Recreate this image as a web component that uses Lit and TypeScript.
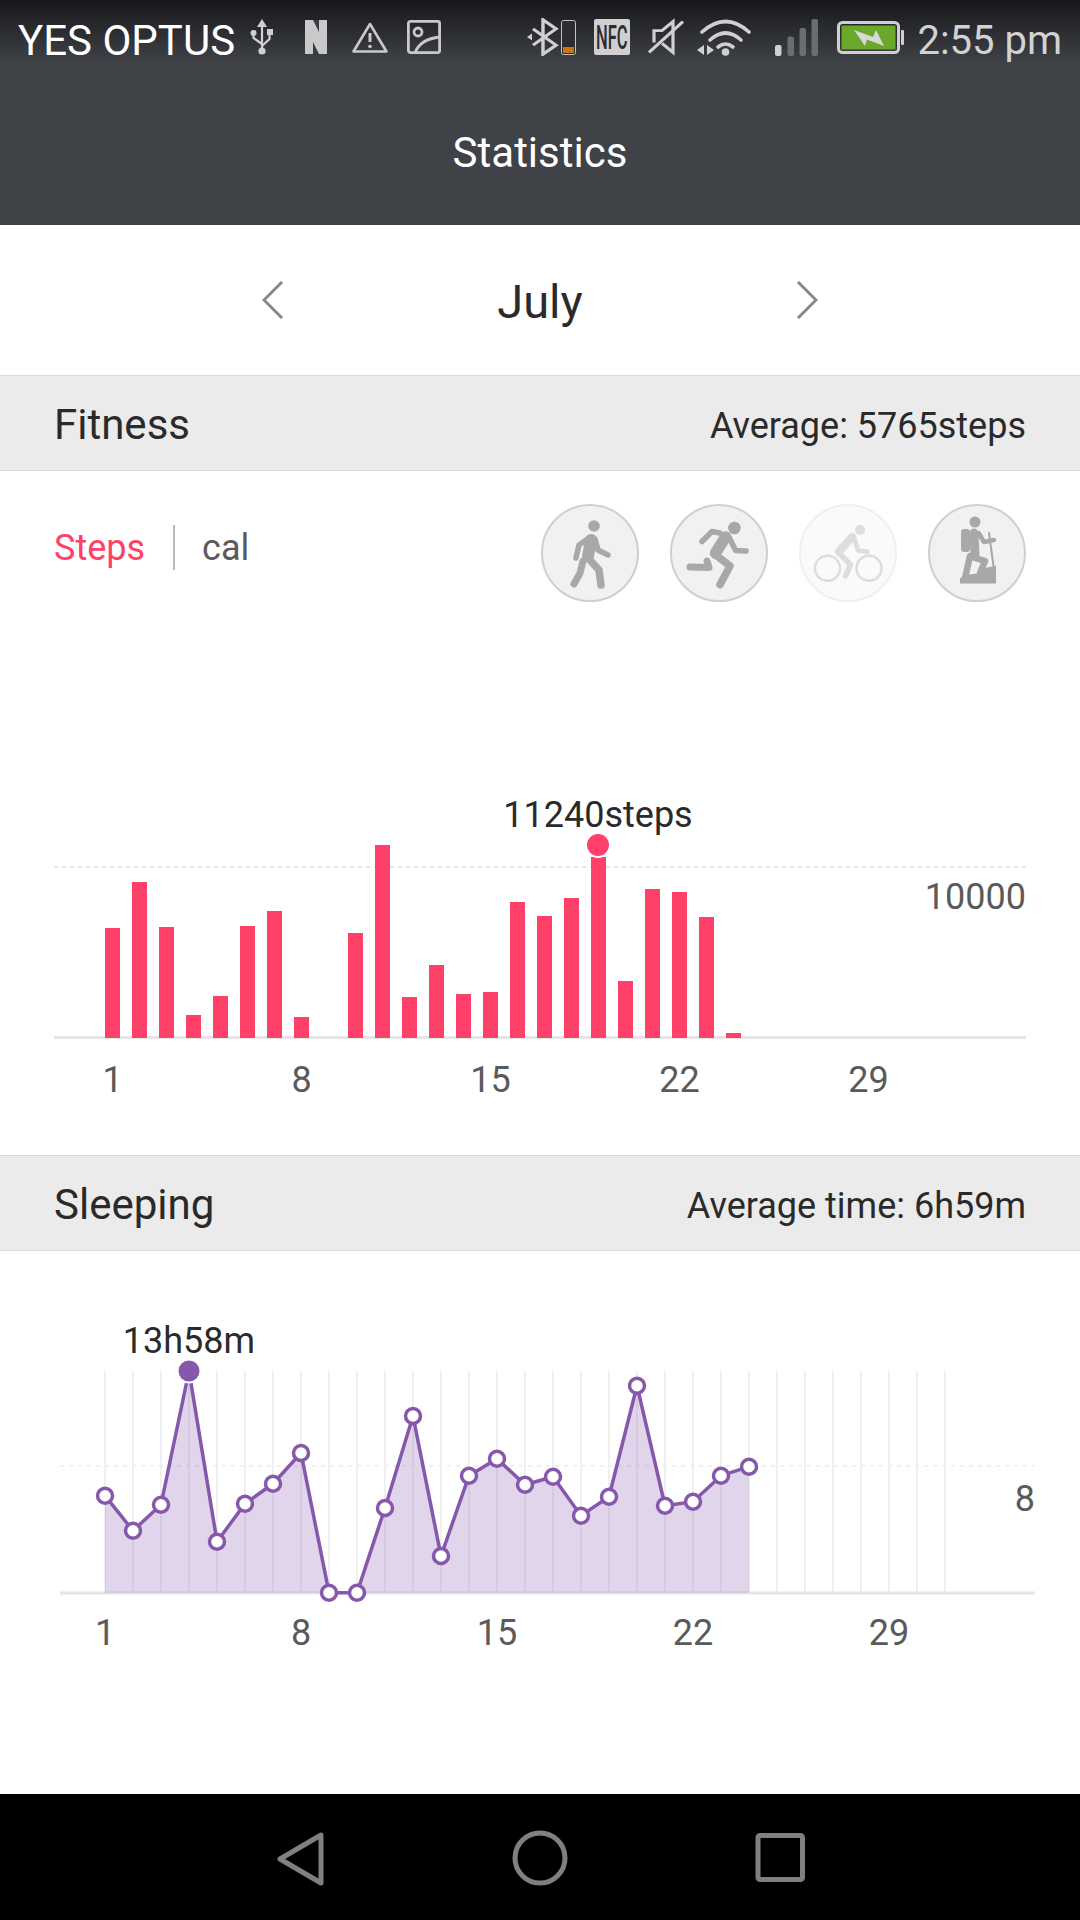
import { LitElement, html, svg, css } from "lit";
import { customElement } from "lit/decorators.js";

// top edge of each bar in page pixels, 0 = no bar that day
const STEP_TOPS = [928, 882, 927, 1015, 996, 926, 911, 1017, 0, 933, 845, 997, 965, 994, 992, 902, 916, 898, 857, 981, 889, 892, 917, 1033];
const BAR_BOTTOM = 1038;

const SLEEP_Y = [1495.7, 1530.7, 1504.7, 1371, 1541.7, 1503.7, 1483.7, 1453, 1592.7, 1592.7, 1508, 1416, 1556, 1475.7, 1458.7, 1484.7, 1476.7, 1515.7, 1496.7, 1385.7, 1505.7, 1501.7, 1475.7, 1466.7];
const sleepX = (i: number) => 105 + 28 * i;

const walker = svg`
  <circle class="solid" cx="53" cy="22" r="5.8"></circle>
  <path d="M50 36 L47 52" stroke-width="12"></path>
  <path d="M48 34 L38 41 L35 54" stroke-width="5.5"></path>
  <path d="M54 35 L57 46 L67 51" stroke-width="5.5"></path>
  <path d="M47 54 L58 66 L60 81" stroke-width="7.5"></path>
  <path d="M42 57 L39 69 L33 80" stroke-width="7"></path>`;

const runner = svg`
  <circle class="solid" cx="64.4" cy="24" r="6.3"></circle>
  <path d="M55.5 33 L45.5 49" stroke-width="11.5"></path>
  <path d="M50 29 L42 27.5 L32 37.5" stroke-width="5.5"></path>
  <path d="M59 33 L65.6 46.5 L76 47" stroke-width="5.5"></path>
  <path d="M45.5 50.7 L60 62 L50 80.6" stroke-width="7.5"></path>
  <path d="M37 57 L39 63.5 L20 63" stroke-width="7"></path>`;

const cyclist = svg`
  <circle class="ring" cx="28.5" cy="64.3" r="12.5"></circle>
  <circle class="ring" cx="70" cy="64.3" r="12.5"></circle>
  <circle class="solid" cx="61" cy="26" r="5"></circle>
  <path d="M53 33 L40 47.5" stroke-width="8"></path>
  <path d="M55 33 L59 46.5 L68.5 47.8" stroke-width="4.5"></path>
  <path d="M40 49 L51.5 60.7 L46.5 72" stroke-width="5.5"></path>`;

const hiker = svg`
  <circle class="solid" cx="47" cy="18" r="5.5"></circle>
  <rect class="solid" x="33" y="25" width="9" height="23" rx="3"></rect>
  <path d="M46 29 L47 50" stroke-width="9"></path>
  <path d="M50.6 29 L56 38 L66 36" stroke-width="4.5"></path>
  <path d="M61 29 L65.5 62" stroke-width="2"></path>
  <path d="M44 53 L57 57 L52 69" stroke-width="6.5"></path>
  <path d="M42 52 L37 74" stroke-width="6.5"></path>
  <polygon class="solid" points="32,79.6 32,74 41,70.6 54,69 57,64 68,61.7 68,79.6"></polygon>`;

@customElement("app-root")
export class AppRoot extends LitElement {
  static styles = css`
    :host {
      display: flex;
      flex-direction: column;
      width: 1080px;
      height: 1920px;
      background: #fff;
      font-family: Roboto, sans-serif;
      color: #2a2a2a;
      overflow: hidden;
    }

    header {
      background: linear-gradient(#17181b 0, #3f4247 64px);
      color: #fff;
    }
    .status {
      display: flex;
      align-items: center;
      height: 74px;
      padding: 0 18px;
    }
    .status svg { display: block; flex: none; }
    .carrier { font-size: 42px; line-height: 44px; margin-top: 7px; }
    .usb { width: 24px; height: 36px; margin-left: 15px; }
    .n-icon { width: 22px; height: 34px; margin-left: 31px; }
    .warn { width: 36px; height: 31px; margin-left: 25px; }
    .image { width: 34px; height: 34px; margin-left: 19px; }
    .right { display: flex; align-items: center; margin-left: auto; }
    .bt { width: 32px; height: 38px; }
    .minibat { width: 15px; height: 35px; margin-left: 2px; }
    .nfc { width: 36px; height: 36px; margin-left: 18px; overflow: visible; }
    .mute { width: 36px; height: 38px; margin-left: 18px; }
    .wifi { width: 55px; height: 37px; margin-left: 13px; }
    .signal { width: 44px; height: 37px; margin-left: 23px; }
    .battery { width: 67px; height: 33px; margin-left: 18px; }
    .time { font-size: 40px; line-height: 44px; color: #d2d2d2; margin: 7px 0 0 13px; }

    .toolbar {
      height: 146px;
      padding-top: 5px;
      display: flex;
      align-items: center;
      justify-content: center;
      font-size: 42px;
    }

    .month {
      height: 150px;
      display: grid;
      grid-template-columns: 262px 22px 1fr 22px 262px;
      align-items: center;
      font-size: 47px;
      text-align: center;
    }
    .month span { padding-top: 2px; }
    .month svg { display: block; width: 22px; height: 38px; }
    .month .prev { grid-column: 2; }

    .section-head {
      height: 94px;
      display: flex;
      align-items: center;
      justify-content: space-between;
      padding: 0 54px;
      background: #ebebeb;
      border-top: 1px solid #d9d9d9;
      border-bottom: 1px solid #d9d9d9;
    }
    .section-head .name { font-size: 42px; padding-top: 2px; }
    .section-head .avg { font-size: 36px; padding-top: 6px; }

    .fitness { height: 684px; }
    .tabs {
      display: flex;
      align-items: flex-start;
      justify-content: space-between;
      padding: 33px 54px 0;
    }
    .units {
      display: flex;
      align-items: center;
      height: 86px;
      font-size: 36px;
      color: #5a5a5a;
    }
    .units span:not(.sep) { padding-top: 2px; }
    .units .active { color: #ff4068; }
    .units .sep { width: 2px; height: 45px; background: #bbb; margin: 0 27px 0 28px; }
    .kinds { display: flex; gap: 31px; }
    .kind {
      width: 98px;
      height: 98px;
      box-sizing: border-box;
      border-radius: 50%;
      background: #f1f1f1;
      border: 2px solid #cfcfcf;
    }
    .kind svg { display: block; margin: -2px; width: 98px; height: 98px; }
    .kind path { fill: none; stroke: #a8a8a8; stroke-linecap: round; stroke-linejoin: round; }
    .kind .solid { fill: #a8a8a8; stroke: none; }
    .kind .ring { fill: none; stroke: #a8a8a8; stroke-width: 2.5; }
    .kind.off { background: #fafafa; border-color: #f0f0f0; }
    .kind.off path { stroke: #ddd; }
    .kind.off .solid { fill: #ddd; }
    .kind.off .ring { stroke: #ddd; }

    .chart { position: relative; margin-top: 237px; }
    .guide {
      position: absolute;
      left: 54px;
      right: 54px;
      top: 27px;
      height: 2px;
      background: repeating-linear-gradient(90deg, #e6e6e6 0 4px, transparent 4px 8px);
    }
    .bars {
      position: relative;
      z-index: 1;
      display: flex;
      align-items: flex-end;
      gap: 12px;
      height: 199px;
      padding-left: 105px;
    }
    .bar { flex: none; width: 15px; background: #ff4068; }
    .axis { height: 3px; margin: -2px 54px 0; background: #e5e5e5; }
    .peak {
      position: absolute;
      left: 598px;
      top: -44px;
      transform: translateX(-50%);
      font-size: 36px;
      line-height: 40px;
      white-space: nowrap;
    }
    .peak-dot {
      position: absolute;
      z-index: 2;
      left: 585px;
      top: -7px;
      width: 22px;
      height: 22px;
      border-radius: 50%;
      background: #ff4068;
      border: 2px solid #fff;
    }
    .max {
      position: absolute;
      right: 54px;
      top: 38px;
      font-size: 36px;
      line-height: 40px;
      color: #5a5a5a;
    }
    .ticks {
      display: grid;
      font-size: 36px;
      line-height: 40px;
      color: #5a5a5a;
      text-align: center;
    }
    .ticks.steps { grid-template-columns: repeat(5, 189px); margin: 21px 0 0 18px; }
    .ticks.sleep { grid-template-columns: repeat(5, 196px); margin: 3px 0 0 7px; }

    .sleeping { flex: 1; }
    .sleep-chart { display: block; width: 1080px; height: 290px; margin-top: 69px; }
    .sleep-chart text { font-family: Roboto, sans-serif; font-size: 36px; }

    nav {
      flex: none;
      height: 126px;
      background: #000;
      display: grid;
      grid-template-columns: repeat(3, 240px);
      justify-content: center;
      align-items: center;
      justify-items: center;
    }
    nav svg { display: block; width: 60px; height: 60px; fill: none; stroke: #808080; stroke-width: 5; stroke-linejoin: round; }
  `;

  private renderStatus() {
    return html`
      <div class="status">
        <span class="carrier">YES OPTUS</span>
        <svg class="usb" viewBox="0 0 24 36">
          <polygon points="12,0 7,8 17,8" fill="#d0d0d0"></polygon>
          <path d="M12 7 V32 M3.5 15 V19 L12 25 M19.5 14 V20 L12 27" fill="none" stroke="#d0d0d0" stroke-width="2.2"></path>
          <circle cx="12" cy="32" r="3.6" fill="#d0d0d0"></circle>
          <circle cx="3.5" cy="14" r="3" fill="#d0d0d0"></circle>
          <rect x="17" y="10" width="6" height="6" fill="#d0d0d0"></rect>
        </svg>
        <svg class="n-icon" viewBox="0 0 22 34">
          <rect width="22" height="34" fill="#c9c9c9"></rect>
          <polygon points="8,0 14,0 14,12" fill="#3a3c41"></polygon>
          <polygon points="8,22 8,34 14,34" fill="#3a3c41"></polygon>
        </svg>
        <svg class="warn" viewBox="0 0 36 31">
          <polygon points="18,2 34.5,29.5 1.5,29.5" fill="none" stroke="#c9c9c9" stroke-width="2.6" stroke-linejoin="round"></polygon>
          <path d="M18 11 V20" stroke="#c9c9c9" stroke-width="3"></path>
          <circle cx="18" cy="24.5" r="1.8" fill="#c9c9c9"></circle>
        </svg>
        <svg class="image" viewBox="0 0 34 34" fill="none" stroke="#c9c9c9" stroke-width="2.8">
          <rect x="1.4" y="1.4" width="31.2" height="31.2" rx="2"></rect>
          <circle cx="11" cy="12" r="4"></circle>
          <path d="M8 33 Q13 19 33 17"></path>
        </svg>
        <div class="right">
          <svg class="bt" viewBox="0 0 32 42" preserveAspectRatio="none">
            <path d="M6 12 L29 30 L16 40 V2 L29 12 L6 30" fill="none" stroke="#d0d0d0" stroke-width="3.4"></path>
            <polygon points="0,21 5,17 5,25" fill="#d0d0d0"></polygon>
          </svg>
          <svg class="minibat" viewBox="0 0 15 35">
            <rect x=".5" y=".5" width="14" height="34" rx="2" fill="#2c2d31" stroke="#c4c4c4"></rect>
            <rect x="2" y="27" width="11" height="6" fill="#c97415"></rect>
          </svg>
          <svg class="nfc" viewBox="0 0 36 36">
            <rect width="36" height="36" rx="2" fill="#d0d0d0"></rect>
            <text transform="translate(2 30) scale(.5 1)" font-family="Roboto, sans-serif" font-size="33" font-weight="500" fill="#2b2c30">NFC</text>
          </svg>
          <svg class="mute" viewBox="0 0 36 42" preserveAspectRatio="none" fill="none" stroke="#d0d0d0" stroke-width="3.2">
            <path d="M6 27 V14 H14 L25 4 V38 L14 28"></path>
            <path d="M1 38 L35 4"></path>
          </svg>
          <svg class="wifi" viewBox="0 0 55 37" fill="none" stroke="#d0d0d0" stroke-width="3.6" stroke-linecap="round">
            <path d="M5 13 Q28.5 -8 52 13"></path>
            <path d="M13 21 Q28.5 7 44 21"></path>
            <path d="M21 28 Q28.5 22 36 28"></path>
            <circle cx="28.5" cy="33" r="3.8" fill="#d0d0d0" stroke="none"></circle>
            <polygon points="7,26 7,36 0,31" fill="#d0d0d0" stroke="none"></polygon>
            <polygon points="10,26 10,36 17,31" fill="#d0d0d0" stroke="none"></polygon>
          </svg>
          <svg class="signal" viewBox="0 0 44 37">
            <rect x="0" y="26" width="6.5" height="11" rx="2" fill="#d0d0d0"></rect>
            <rect x="12.5" y="17.5" width="6.5" height="19.5" rx="2" fill="#6a6d71"></rect>
            <rect x="24.5" y="9" width="6.5" height="28" rx="2" fill="#6a6d71"></rect>
            <rect x="36.5" y="0" width="6.5" height="37" rx="2" fill="#6a6d71"></rect>
          </svg>
          <svg class="battery" viewBox="0 0 67 33">
            <rect x="1.5" y="1.5" width="60" height="30" rx="4" fill="none" stroke="#d0d0d0" stroke-width="3"></rect>
            <rect x="64" y="9" width="3" height="15" rx="1" fill="#d0d0d0"></rect>
            <rect x="4.5" y="4.5" width="54" height="24" fill="#6aa82c"></rect>
            <polygon points="17,9 36,16 39,9 47,25 30,18.5 28,25" fill="#d8d8d8"></polygon>
          </svg>
          <span class="time">2:55 pm</span>
        </div>
      </div>
    `;
  }

  private renderSleepChart() {
    const last = SLEEP_Y.length - 1;
    const line = SLEEP_Y.map((y, i) => `${sleepX(i)},${y}`).join(" ");
    const area = `105,1592.7 ${line} ${sleepX(last)},1592.7`;
    const grid = Array.from({ length: 31 }, (_, i) => sleepX(i));
    return html`
      <svg class="sleep-chart" viewBox="0 1320 1080 290">
        ${grid.map((x) => svg`<line x1=${x} x2=${x} y1="1371" y2="1593" stroke="#f0f0f0" stroke-width="2"></line>`)}
        <line x1="60" x2="1035" y1="1465.7" y2="1465.7" stroke="#eee" stroke-width="2" stroke-dasharray="4 5"></line>
        <line x1="60" x2="1035" y1="1593" y2="1593" stroke="#e5e5e5" stroke-width="3"></line>
        <polygon points=${area} fill="#8558ac" fill-opacity=".25"></polygon>
        <polyline points=${line} fill="none" stroke="#8558ac" stroke-width="3.5"></polyline>
        ${SLEEP_Y.map((y, i) =>
          i === 3
            ? svg`<circle cx=${sleepX(i)} cy=${y} r="12.5" fill="#fff"></circle><circle cx=${sleepX(i)} cy=${y} r="10.5" fill="#8558ac"></circle>`
            : svg`<circle cx=${sleepX(i)} cy=${y} r="7.5" fill="#fff" stroke="#8558ac" stroke-width="3.5"></circle>`
        )}
        <text x="189" y="1353" text-anchor="middle" fill="#2a2a2a">13h58m</text>
        <text x="1035" y="1511" text-anchor="end" fill="#5a5a5a">8</text>
      </svg>
    `;
  }

  render() {
    return html`
      <header>
        ${this.renderStatus()}
        <div class="toolbar">Statistics</div>
      </header>

      <div class="month">
        <svg class="prev" viewBox="0 0 22 38" fill="none" stroke="#8a8a8a" stroke-width="3"><path d="M20 1 L2 19 L20 37"></path></svg>
        <span>July</span>
        <svg viewBox="0 0 22 38" fill="none" stroke="#8a8a8a" stroke-width="3"><path d="M2 1 L20 19 L2 37"></path></svg>
      </div>

      <div class="section-head">
        <span class="name">Fitness</span>
        <span class="avg">Average: 5765steps</span>
      </div>
      <section class="fitness">
        <div class="tabs">
          <div class="units">
            <span class="active">Steps</span>
            <span class="sep"></span>
            <span>cal</span>
          </div>
          <div class="kinds">
            <div class="kind"><svg viewBox="0 0 98 98">${walker}</svg></div>
            <div class="kind"><svg viewBox="0 0 98 98">${runner}</svg></div>
            <div class="kind off"><svg viewBox="0 0 98 98">${cyclist}</svg></div>
            <div class="kind"><svg viewBox="0 0 98 98">${hiker}</svg></div>
          </div>
        </div>
        <div class="chart">
          <div class="guide"></div>
          <div class="bars">
            ${STEP_TOPS.map((top) => html`<div class="bar" style="height:${top ? BAR_BOTTOM - top : 0}px"></div>`)}
          </div>
          <div class="axis"></div>
          <span class="peak">11240steps</span>
          <span class="peak-dot"></span>
          <span class="max">10000</span>
        </div>
        <div class="ticks steps">
          <span>1</span><span>8</span><span>15</span><span>22</span><span>29</span>
        </div>
      </section>

      <div class="section-head">
        <span class="name">Sleeping</span>
        <span class="avg">Average time: 6h59m</span>
      </div>
      <section class="sleeping">
        ${this.renderSleepChart()}
        <div class="ticks sleep">
          <span>1</span><span>8</span><span>15</span><span>22</span><span>29</span>
        </div>
      </section>

      <nav>
        <svg viewBox="0 0 60 60"><polygon points="10,32 51,8 51,56"></polygon></svg>
        <svg viewBox="0 0 60 60"><circle cx="30" cy="31" r="25"></circle></svg>
        <svg viewBox="0 0 60 60"><rect x="8" y="8.5" width="44.5" height="44" rx="2"></rect></svg>
      </nav>
    `;
  }
}
